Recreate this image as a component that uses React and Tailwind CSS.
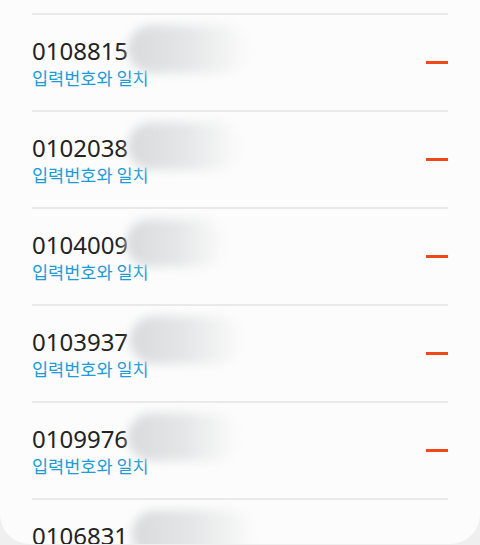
import React from 'react';

const rows = [
  { num: '0108815', blob: 'left-[96px] w-[120px]' },
  { num: '0102038', blob: 'left-[96px] w-[112px]' },
  { num: '0104009', blob: 'left-[94px] w-[100px]' },
  { num: '0103937', blob: 'left-[98px] w-[112px]' },
  { num: '0109976', blob: 'left-[96px] w-[110px]' },
  { num: '0106831', blob: 'left-[100px] w-[122px]' },
];

const Row = ({ row }) => (
  <div>
    <div className="h-[2px] bg-[#e9e9e9]" />
    <div className="h-[95px] flex items-center justify-between">
      <div className="relative">
        <div className="text-[24px] leading-[30px] text-[#232323]" style={{ fontFamily: '"Noto Sans", sans-serif' }}>
          {row.num}
        </div>
        <div className="text-[17.5px] leading-[22px] text-[#1e9bd7] pt-[1px]" style={{ fontFamily: '"Noto Sans CJK KR", sans-serif' }}>
          입력번호와 일치
        </div>
        {/* 번호 가림 */}
        <div className={`absolute top-[-11px] h-[48px] rounded-full blur-[5px] bg-gradient-to-r from-[#d8dadc] via-[#e5e6e7] to-[#fbfbfb] ${row.blob}`} />
      </div>
      <div className="w-[22px] h-[3px] bg-[#f04818]" />
    </div>
  </div>
);

export default function App() {
  return (
    <div className="h-[545px] bg-[#efefef] overflow-hidden">
      <div className="h-[544px] bg-[#fcfcfc] rounded-b-[30px] overflow-hidden pt-[13px] px-8">
        {rows.map((row, i) => (
          <Row key={i} row={row} />
        ))}
      </div>
    </div>
  );
}
